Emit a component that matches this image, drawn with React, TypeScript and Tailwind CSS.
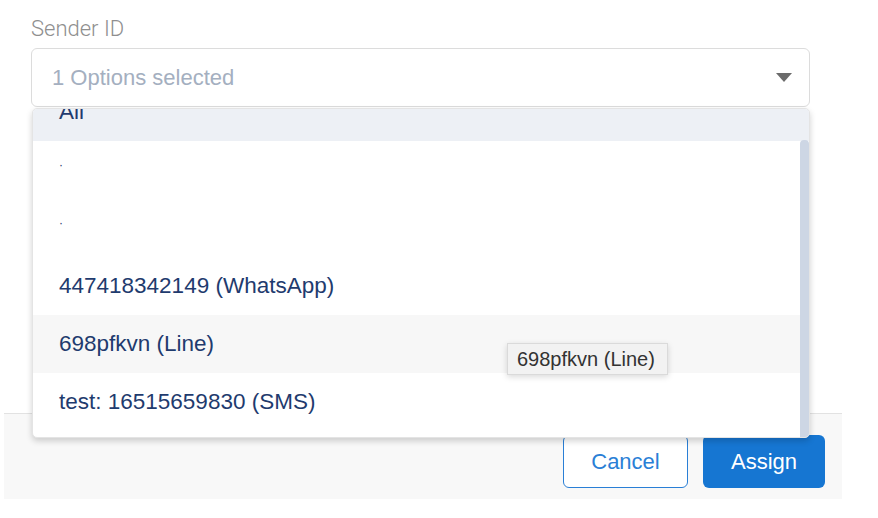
// @ts-nocheck
import React from "react";

const options = [
  { label: "All", selected: true },
  { label: "·", tiny: true },
  { label: "·", tiny: true },
  { label: "447418342149 (WhatsApp)" },
  { label: "698pfkvn (Line)", hover: true },
  { label: "test: 16515659830 (SMS)" },
];

export default function App() {
  return (
    <div
      className="w-[878px] h-[518px] bg-white overflow-hidden"
      style={{ fontFamily: '"Liberation Sans", Arial, sans-serif' }}
    >
      <div className="ml-[4px] w-[838px] h-[499px] flex flex-col">
        {/* body */}
        <div className="h-[413px] pl-[27px] pr-[32px] pt-[16px]">
          <label
            className="block text-[22px] leading-[26px] text-[#8f8f8f] font-light mb-[6px]"
            style={{ fontFamily: 'Roboto, "Liberation Sans", sans-serif' }}
          >
            Sender ID
          </label>

          <div className="relative">
            <div className="h-[59px] border border-[#dcdcdc] rounded-[6px] flex items-center justify-between pl-[20px] pr-[17px] bg-white">
              <span className="text-[22px] text-[#a4afc0]">1 Options selected</span>
              <svg width="16" height="10" viewBox="0 0 16 10">
                <path d="M0 0 L16 0 L8 9 Z" fill="#6b6b6b" />
              </svg>
            </div>

            {/* dropdown menu */}
            <div className="absolute left-[1px] top-[60px] w-[778px] h-[330px] bg-white border border-[#e4e4e4] rounded-[5px] shadow-[0_3px_6px_rgba(0,0,0,0.18)] overflow-hidden z-10">
              <div className="-mt-[26px]">
                {options.map((o, i) => (
                  <div
                    key={i}
                    className={
                      "h-[58px] flex items-center pl-[26px] text-[#1f3b6e] " +
                      (o.tiny ? "text-[12px] pb-[10px] " : "text-[22.5px] ") +
                      (o.selected ? "bg-[#edf0f5]" : o.hover ? "bg-[#f7f7f7]" : "bg-white")
                    }
                  >
                    {o.label}
                  </div>
                ))}
              </div>
              {/* scrollbar thumb */}
              <div className="absolute right-0 top-[31px] bottom-0 w-[9px] bg-[#cdd6e4] rounded-t-[4px]" />
            </div>

            {/* tooltip */}
            <div className="absolute left-[476px] top-[295px] w-[161px] h-[32px] bg-[#f2f2f2] border border-[#dadada] shadow-[0_2px_6px_rgba(0,0,0,0.15)] flex items-center pl-[9px] text-[20px] text-[#333333] z-20">
              698pfkvn (Line)
            </div>
          </div>
        </div>

        {/* footer */}
        <div className="h-[86px] bg-[#f8f8f8] border-t border-[#e2e2e2] flex justify-end items-start gap-[15px] pt-[21px] pr-[17px]">
          <button className="w-[125px] h-[53px] rounded-[6px] border-[1.5px] border-[#2a7fd6] bg-white text-[#2a7fd6] text-[22px]">
            Cancel
          </button>
          <button className="w-[122px] h-[53px] rounded-[6px] bg-[#1676d2] text-white text-[22px]">
            Assign
          </button>
        </div>
      </div>
    </div>
  );
}
